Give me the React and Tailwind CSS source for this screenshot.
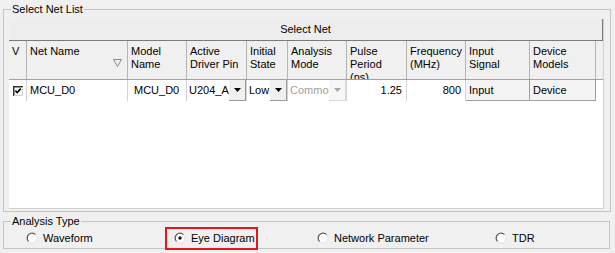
import React from "react";

const grid =
  "grid grid-cols-[18px_101px_59px_60px_41px_59px_60px_59px_64px_66px]";

const headers = [
  "V",
  "Net Name",
  "Model\nName",
  "Active\nDriver Pin",
  "Initial\nState",
  "Analysis\nMode",
  "Pulse\nPeriod\n(ns)",
  "Frequency\n(MHz)",
  "Input\nSignal",
  "Device\nModels",
];

function Radio({ checked }) {
  return (
    <svg width="12" height="12" viewBox="0 0 12 12" className="shrink-0">
      <circle cx="6" cy="6" r="4.6" fill="#fff" />
      <path d="M9.6 2.6 A4.8 4.8 0 0 0 2.6 9.6" stroke="#5a5a5a" strokeWidth="1.3" fill="none" />
      <path d="M9.6 2.6 A4.8 4.8 0 0 1 2.6 9.6" stroke="#e4e4e4" strokeWidth="1" fill="none" />
      {checked && <circle cx="6" cy="6" r="1.7" fill="#111" />}
    </svg>
  );
}

function Arrow({ disabled }) {
  return (
    <svg width="7" height="4" viewBox="0 0 7 4">
      <polygon points="0,0 7,0 3.5,4" fill={disabled ? "#a8a8a8" : "#000"} />
    </svg>
  );
}

function Combo({ value, disabled }) {
  return (
    <div className="flex h-full">
      <div
        className={
          "flex-1 overflow-hidden whitespace-nowrap pl-[2px] pt-[4px] " +
          (disabled ? "bg-white text-[#a0a0a0]" : "")
        }
      >
        {value}
      </div>
      <div
        className={
          "flex w-[17px] shrink-0 items-center justify-center border-b border-r " +
          (disabled
            ? "border-[#d8d8d8] bg-[#f7f7f7]"
            : "border-[#9a9a9a] bg-[#f0f0f0]")
        }
      >
        <Arrow disabled={disabled} />
      </div>
    </div>
  );
}

function CellButton({ label }) {
  return (
    <div className="h-full border-b border-r border-[#a0a0a0] bg-[#f4f4f4] pl-[3px] pt-[4px]">
      {label}
    </div>
  );
}

export default function App() {
  return (
    <div className="h-[253px] w-[615px] overflow-hidden bg-[#f0f0f0] font-['Liberation_Sans',Arial,sans-serif] text-[11px] leading-[13px] text-black">
      {/* Select Net List */}
      <fieldset className="ml-[3px] mt-[3px] w-[608px] border border-[#c4c4c4] pb-[2px] pl-[5px] pr-[6px] pt-[3px]">
        <legend className="ml-[2px] px-[1px] leading-[13px]">Select Net List</legend>
        <div className="h-[190px] border-r border-b border-[#d0d0d0] bg-white">
          <div className="flex h-[22px] items-center justify-center border-b border-r border-[#7a7a7a] bg-[#ededed]">
            Select Net
          </div>

          {/* header */}
          <div className={grid + " h-[39px] border-b border-[#a0a0a0] bg-[#f0f0f0]"}>
            {headers.map((h, i) => (
              <div
                key={h}
                className="flex justify-between overflow-hidden border-r border-[#b4b4b4] pl-[3px] pt-[4px]"
              >
                <span className="whitespace-pre-line">{h}</span>
                {i === 1 && (
                  <svg width="9" height="8" viewBox="0 0 9 8" className="mr-[5px] mt-[14px] shrink-0">
                    <polygon points="0.5,0.5 8.5,0.5 4.5,7.5" fill="none" stroke="#8a8a8a" />
                  </svg>
                )}
              </div>
            ))}
          </div>

          {/* row */}
          <div className={grid + " h-[21px]"}>
            <div className="flex items-center justify-center border-r border-[#d4d4d4]">
              <svg width="10" height="10" viewBox="0 0 10 10">
                <rect x="0" y="0" width="10" height="10" fill="#fff" />
                <path d="M0.75 10V0.75H10" stroke="#333" strokeWidth="1.5" fill="none" />
                <path d="M1 9.5H9.5V1" stroke="#d0d0d0" fill="none" />
                <path d="M2.4 4.6 L4.2 6.6 L7.8 2.6" stroke="#000" strokeWidth="1.6" fill="none" />
              </svg>
            </div>
            <div className="border-r border-[#d4d4d4] pl-[3px] pt-[4px]">MCU_D0</div>
            <div className="border-r border-[#d4d4d4] pl-[6px] pt-[4px]">MCU_D0</div>
            <div className="border-r border-[#d4d4d4]">
              <Combo value="U204_A1" />
            </div>
            <div className="border-r border-[#d4d4d4]">
              <Combo value="Low" />
            </div>
            <div className="border-r border-[#d4d4d4]">
              <Combo value="Common" disabled />
            </div>
            <div className="border-r border-[#d4d4d4] pr-[4px] pt-[4px] text-right">1.25</div>
            <div className="border-r border-[#d4d4d4] pr-[4px] pt-[4px] text-right">800</div>
            <CellButton label="Input" />
            <CellButton label="Device" />
          </div>
        </div>
      </fieldset>

      {/* Analysis Type */}
      <fieldset className="ml-[3px] mt-[3px] w-[607px] border border-[#c4c4c4] pb-[1px] pt-[1px]">
        <legend className="ml-[7px] px-[1px] leading-[13px]">Analysis Type</legend>
        <div className="grid h-[18px] grid-cols-[148px_143px_178px_auto] items-center pl-[22px]">
          <div className="flex items-center gap-[5px]">
            <Radio />
            <span>Waveform</span>
          </div>
          <div className="relative flex items-center gap-[5px]">
            <div className="absolute -left-[9px] -top-[5px] h-[23px] w-[93px] border-2 border-[#e8141c]" />
            <Radio checked />
            <span>Eye Diagram</span>
          </div>
          <div className="flex items-center gap-[5px]">
            <Radio />
            <span>Network Parameter</span>
          </div>
          <div className="flex items-center gap-[5px]">
            <Radio />
            <span>TDR</span>
          </div>
        </div>
      </fieldset>
    </div>
  );
}
